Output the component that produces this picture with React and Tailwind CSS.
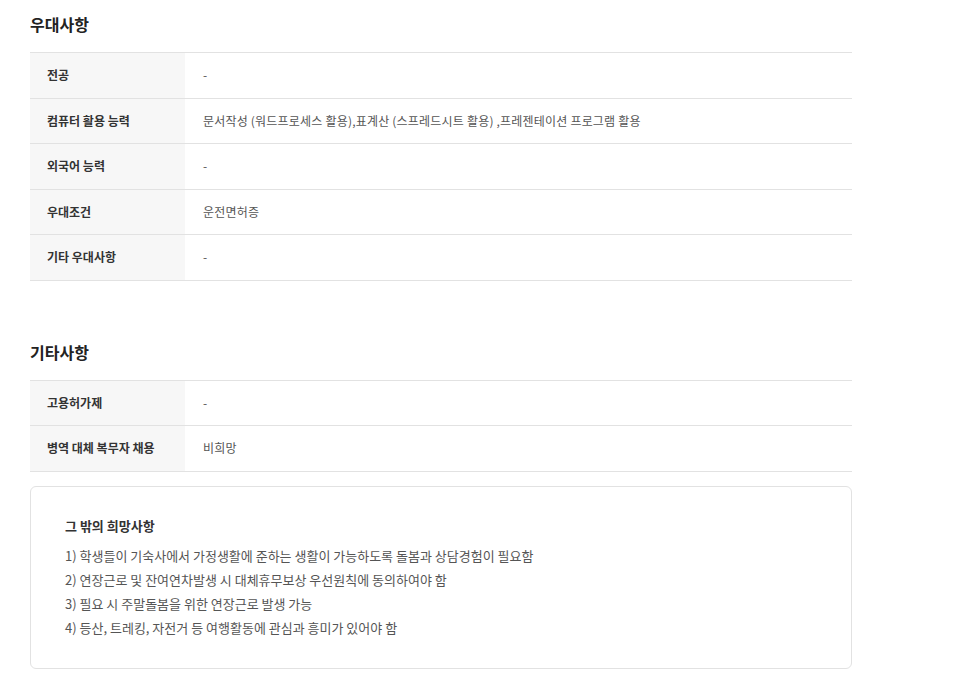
import React from "react";

const font = { fontFamily: '"Noto Sans CJK KR", "Noto Sans", sans-serif' };

function Row({ label, value }) {
  return (
    <div className="flex h-[45.5px] border-b border-[#e2e2e2]">
      <div className="flex w-[155px] shrink-0 items-center bg-[#f7f7f7] px-[17px] text-[12px] font-bold text-[#333]">
        {label}
      </div>
      <div className="flex items-center px-[18px] text-[12px] text-[#555] tracking-[0.2px]">
        {value}
      </div>
    </div>
  );
}

export default function App() {
  return (
    <div className="min-h-[677px] bg-white" style={font}>
      <div className="w-[822px] ml-[30px] pt-[11px]">
        <h2 className="text-[16px] font-bold text-[#222] leading-[26px]">우대사항</h2>
        <div className="mt-[15px] border-t border-[#e2e2e2]">
          <Row label="전공" value="-" />
          <Row label="컴퓨터 활용 능력" value="문서작성 (워드프로세스 활용),표계산 (스프레드시트 활용)  ,프레젠테이션 프로그램 활용" />
          <Row label="외국어 능력" value="-" />
          <Row label="우대조건" value="운전면허증" />
          <Row label="기타 우대사항" value="-" />
        </div>

        <h2 className="mt-[58px] text-[16px] font-bold text-[#222] leading-[26px]">기타사항</h2>
        <div className="mt-[15px] border-t border-[#e2e2e2]">
          <Row label="고용허가제" value="-" />
          <Row label="병역 대체 복무자 채용" value="비희망" />
        </div>

        <div className="mt-[14px] h-[183px] rounded-[6px] border border-[#e2e2e2] pl-[34px] pt-[30px]">
          <div className="text-[13px] font-bold text-[#333] leading-[18px]">그 밖의 희망사항</div>
          <div className="mt-[9px] text-[13px] text-[#555] leading-[24.3px]">
            <div>1) 학생들이 기숙사에서 가정생활에 준하는 생활이 가능하도록 돌봄과 상담경험이 필요함</div>
            <div>2) 연장근로 및 잔여연차발생 시 대체휴무보상 우선원칙에 동의하여야 함</div>
            <div>3) 필요 시 주말돌봄을 위한 연장근로 발생 가능</div>
            <div>4) 등산, 트레킹, 자전거 등 여행활동에 관심과 흥미가 있어야 함</div>
          </div>
        </div>
      </div>
    </div>
  );
}
